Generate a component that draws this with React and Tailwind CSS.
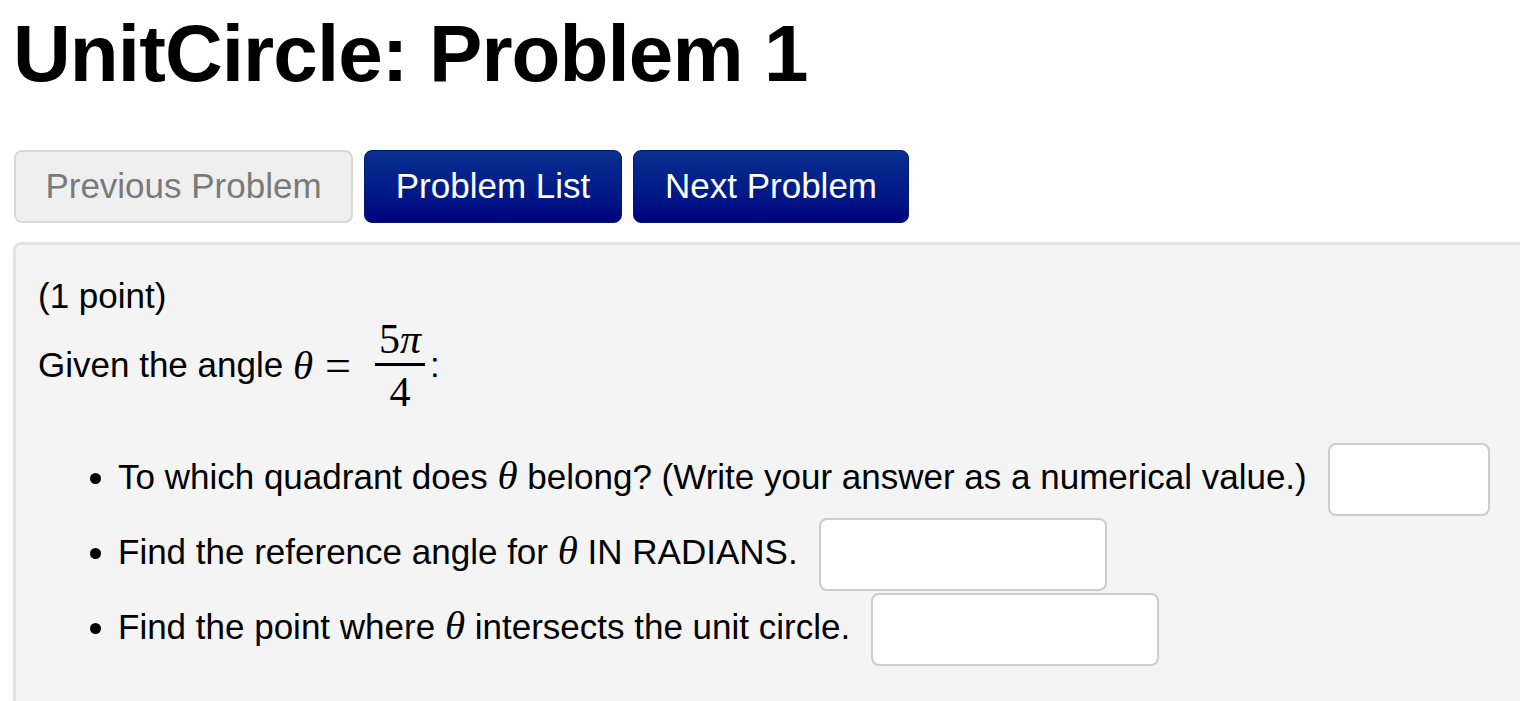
import React from 'react';

const Theta = () => (
  <span className="italic text-[41px]" style={{ fontFamily: '"Liberation Serif", serif' }}>θ</span>
);

const AnswerBox = ({ width }) => (
  <input
    type="text"
    className={`${width} h-[73px] bg-white border-2 border-[#cccccc] rounded-[8px] ml-[21px] align-middle`}
  />
);

const App = () => {
  return (
    <div className="w-[1520px] h-[701px] overflow-hidden bg-white text-black" style={{ fontFamily: '"Liberation Sans", Arial, sans-serif' }}>
      <h1 className="text-[80px] font-bold leading-none pl-[13px] pt-[14px] tracking-[-0.9px]">UnitCircle: Problem 1</h1>

      <div className="flex gap-[11px] pl-[14px] mt-[56px]">
        <button className="w-[339px] h-[73px] rounded-[8px] bg-[#efefef] border-2 border-[#d9d9d9] text-[#7a7a7a] text-[35px]">
          Previous Problem
        </button>
        <button className="w-[258px] h-[73px] rounded-[8px] bg-gradient-to-b from-[#0b2f90] to-[#000080] border border-[#001a70] text-white text-[35px]">
          Problem List
        </button>
        <button className="w-[276px] h-[73px] rounded-[8px] bg-gradient-to-b from-[#0b2f90] to-[#000080] border border-[#001a70] text-white text-[35px]">
          Next Problem
        </button>
      </div>

      <div className="ml-[13px] mt-[19px] w-[1560px] h-[600px] bg-[#f4f4f4] border-[3px] border-[#e3e3e3] rounded-[8px] pl-[22px] pt-[30px] text-[35px]">
        <p className="leading-[42px]">(1 point)</p>
        <div className="flex items-center">
          <span>Given the angle&nbsp;</span>
          <Theta />
          <span className="text-[46px] ml-[12px] mr-[24px] leading-none" style={{ fontFamily: '"Liberation Serif", serif' }}>=</span>
          <span className="inline-flex flex-col items-center" style={{ fontFamily: '"Liberation Serif", serif' }}>
            <span className="text-[42px] leading-[44px]">5<span className="italic">π</span></span>
            <span className="w-[50px] h-[3px] bg-black mt-[2px] mb-[4px]"></span>
            <span className="text-[42px] leading-[44px]">4</span>
          </span>
          <span className="ml-[5px]">:</span>
        </div>

        <ul className="list-disc pl-[80px] mt-[29px]">
          <li className="h-[75px] list-item">
            To which quadrant does <Theta /> belong? (Write your answer as a numerical value.)
            <AnswerBox width="w-[162px]" />
          </li>
          <li className="h-[75px] list-item">
            Find the reference angle for <Theta /> IN RADIANS.
            <AnswerBox width="w-[288px]" />
          </li>
          <li className="h-[75px] list-item">
            Find the point where <Theta /> intersects the unit circle.
            <AnswerBox width="w-[288px]" />
          </li>
        </ul>
      </div>
    </div>
  );
};

export default App;
